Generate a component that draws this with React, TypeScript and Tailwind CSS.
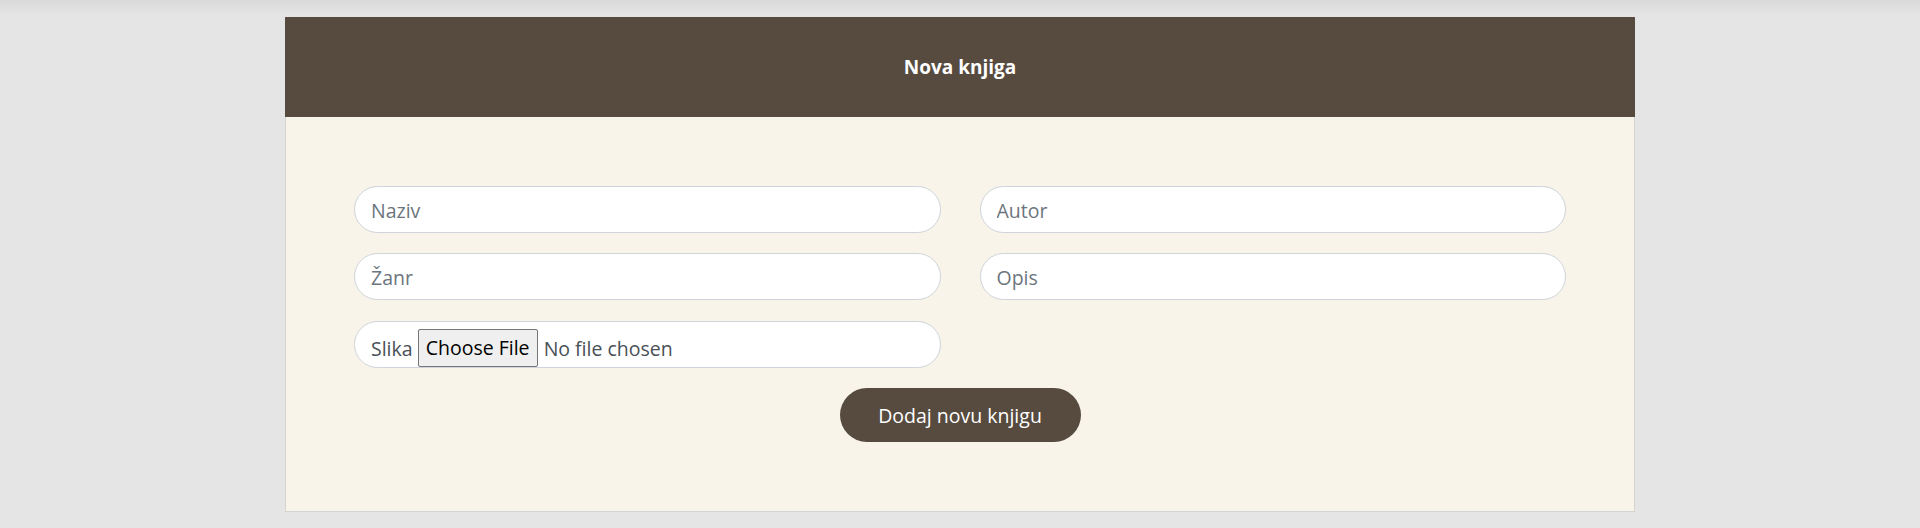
const FONT = "font-['Segoe_UI','Open_Sans','Noto_Sans',sans-serif]";

const FIELDS_LEFT = ["Naziv", "Žanr"];
const FIELDS_RIGHT = ["Autor", "Opis"];

/** Pill-shaped text input, like bootstrap's form-control-lg + rounded-pill. */
function PillInput({ placeholder }: { placeholder: string }) {
  return (
    <input
      type="text"
      placeholder={placeholder}
      className="h-[47px] w-full rounded-full border border-[#ced4da] bg-white px-4 pt-[2px] text-[19.5px] text-[#495057] outline-none placeholder:text-[#6c757d]"
    />
  );
}

/** Fake file picker drawn inside the same pill frame. */
function FileInput() {
  return (
    <label className="flex h-[47px] w-full cursor-pointer items-start rounded-full border border-[#ced4da] bg-white pt-[7px] pl-4 text-[19.5px] leading-[30px] text-[#495057]">
      <span className="pt-[5px]">Slika</span>
      <span className="ml-[5px] flex h-[38px] w-[120px] items-center justify-center rounded-[2px] border border-[#767676] bg-[#efefef] text-black">
        Choose File
      </span>
      <span className="ml-[6px] pt-[5px]">No file chosen</span>
    </label>
  );
}

export default function App() {
  return (
    <div
      className={`min-h-[528px] w-full bg-[#e5e5e5] bg-[linear-gradient(to_bottom,#dadada,#e5e5e5_15px)] pt-[17px] ${FONT}`}
    >
      <div className="mx-auto w-[1350px]">
        <div className="flex h-[100px] items-center justify-center bg-[#574b3f]">
          <h1 className="text-[19px] font-bold text-white">Nova knjiga</h1>
        </div>
        <form className="flex flex-col items-center border border-t-0 border-[#d4d4d4] bg-[#f8f4ea] px-[68px] pt-[69px] pb-[69px]">
          <div className="grid w-full grid-cols-2 gap-x-[39px] gap-y-[20.4px]">
            <PillInput placeholder={FIELDS_LEFT[0]} />
            <PillInput placeholder={FIELDS_RIGHT[0]} />
            <PillInput placeholder={FIELDS_LEFT[1]} />
            <PillInput placeholder={FIELDS_RIGHT[1]} />
            <FileInput />
          </div>
          <button
            type="button"
            className="mt-5 h-[54px] w-[241px] rounded-full bg-[#574b3f] pt-[1px] text-[19.5px] text-white"
          >
            Dodaj novu knjigu
          </button>
        </form>
      </div>
    </div>
  );
}
